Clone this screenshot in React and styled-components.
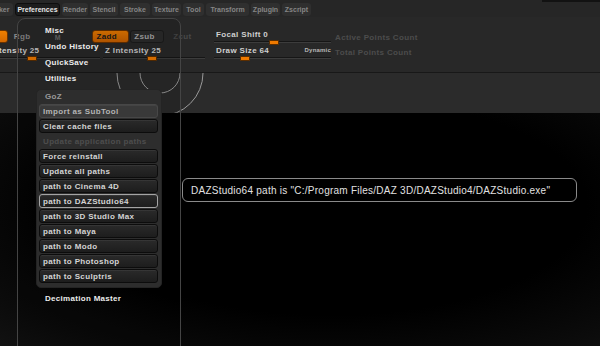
import React from 'react';
import styled, { createGlobalStyle } from 'styled-components';

const GlobalStyle = createGlobalStyle`
  * {
    box-sizing: border-box;
  }
  body {
    margin: 0;
    background: #000;
    overflow: hidden;
  }
`;

const UI_FONT = `"Liberation Sans", Arial, sans-serif`;

const TabList = [
  { name: 'Marker', w: 30 },
  { name: 'Preferences', w: 45, active: true },
  { name: 'Render', w: 26 },
  { name: 'Stencil', w: 28 },
  { name: 'Stroke', w: 30 },
  { name: 'Texture', w: 29 },
  { name: 'Tool', w: 21 },
  { name: 'Transform', w: 43 },
  { name: 'Zplugin', w: 29 },
  { name: 'Zscript', w: 29 },
];

const GozList = [
  { name: 'Import as SubTool', kind: 'soft' },
  { name: 'Clear cache files' },
  { name: 'Update application paths', kind: 'off' },
  { name: 'Force reinstall' },
  { name: 'Update all paths' },
  { name: 'path to Cinema 4D' },
  { name: 'path to DAZStudio64', kind: 'hover' },
  { name: 'path to 3D Studio Max' },
  { name: 'path to Maya' },
  { name: 'path to Modo' },
  { name: 'path to Photoshop' },
  { name: 'path to Sculptris' },
];

function Slider({ label, extra, width, handle, offset }) {
  return (
    <SliderBox $w={width} $offset={offset}>
      <SliderLabel>
        <span>{label}</span>
        {extra && <Tiny>{extra}</Tiny>}
      </SliderLabel>
      <Track>
        <Handle style={{ left: handle }} />
      </Track>
    </SliderBox>
  );
}

function App() {
  return (
    <Screen>
      <GlobalStyle />
      <TabBar>
        <TabStrip>
          {TabList.map(tab => (
            <Tab key={tab.name} $w={tab.w} $active={tab.active}>
              {tab.name}
            </Tab>
          ))}
        </TabStrip>
        <TopShade />
      </TabBar>

      <Toolbar>
        <LeftCluster>
          <ButtonRow>
            <OrangeButton $w={38} />
            <TextCell $w={45} $pad={6} $tone="#8a8a8a">Rgb</TextCell>
            <TextCell $w={40} $pad={2} $tone="#6a6a6a" $small>
              M
            </TextCell>
            <ZButton $w={37} $on>
              Zadd
            </ZButton>
            <ZButton $w={34}>Zsub</ZButton>
            <TextCell $w={40} $pad={8} $tone="#484848">Zcut</TextCell>
          </ButtonRow>
          <SliderRow>
            <Slider label="Rgb Intensity 25" width={130} handle={57} offset={0} />
            <Slider label="Z Intensity 25" width={102} handle={44} offset={3} />
          </SliderRow>
        </LeftCluster>

        <FocalCluster>
          <Slider label="Focal Shift 0" width={117} handle={55} offset={0} />
          <Slider
            label="Draw Size 64"
            extra="Dynamic"
            width={117}
            handle={26}
            offset={0}
          />
        </FocalCluster>

        <Stats>
          <StatLine>Active Points Count</StatLine>
          <StatLine>Total Points Count</StatLine>
        </Stats>
      </Toolbar>

      <Band />
      <Canvas />

      <Cursor width="600" height="40" viewBox="0 0 600 40">
        <circle cx="160" cy="0" r="20" fill="none" stroke="#9a9a9a" strokeWidth="1" />
        <circle cx="160" cy="0" r="43" fill="none" stroke="#9a9a9a" strokeWidth="1" />
      </Cursor>

      <Popup>
        <MenuLabel>Misc</MenuLabel>
        <MenuLabel>Undo History</MenuLabel>
        <MenuLabel>QuickSave</MenuLabel>
        <MenuLabel>Utilities</MenuLabel>
        <GozPanel>
          <GozHeader>GoZ</GozHeader>
          <GozButtons>
            {GozList.map(item => (
              <PathButton key={item.name} $kind={item.kind}>
                {item.name}
              </PathButton>
            ))}
          </GozButtons>
        </GozPanel>
        <MenuLabel $top={3}>Decimation Master</MenuLabel>
      </Popup>

      <Tooltip>
        DAZStudio64 path is "C:/Program Files/DAZ 3D/DAZStudio4/DAZStudio.exe"
      </Tooltip>
    </Screen>
  );
}

const Screen = styled.div`
  position: relative;
  display: flex;
  flex-direction: column;
  width: 600px;
  height: 346px;
  overflow: hidden;
  background: #000;
  font-family: ${UI_FONT};
`;

const TabBar = styled.div`
  display: flex;
  height: 17px;
  background: #262626;
`;

const TabStrip = styled.div`
  display: flex;
  gap: 2px;
  margin-left: -17px;
  padding-top: 3px;
`;

const Tab = styled.div`
  display: flex;
  justify-content: center;
  align-items: center;
  width: ${props => props.$w}px;
  height: 13px;
  border-radius: 3px;
  border: 1px solid ${props => (props.$active ? '#0e0e0e' : 'transparent')};
  background: ${props => (props.$active ? '#1d1d1d' : '#2f2f2f')};
  font-size: 7px;
  font-weight: 700;
  color: ${props => (props.$active ? '#e6e6e6' : '#858585')};
  white-space: nowrap;
`;

const TopShade = styled.div`
  width: 58px;
  height: 2px;
  margin-left: auto;
  background: #121212;
`;

const Toolbar = styled.div`
  display: flex;
  height: 56px;
  padding-top: 12px;
  background: #282828;
  border-bottom: 1px solid #181818;
`;

const LeftCluster = styled.div`
  display: flex;
  flex-direction: column;
  width: 235px;
  margin-left: -30px;
  padding-top: 1px;
`;

const ButtonRow = styled.div`
  display: flex;
  align-items: center;
  height: 13px;
`;

const OrangeButton = styled.div`
  width: ${props => props.$w}px;
  height: 13px;
  border-radius: 3px;
  border: 1px solid #6a3300;
  background: linear-gradient(#f08000, #d46800);
`;

const TextCell = styled.div`
  width: ${props => props.$w}px;
  padding-left: ${props => props.$pad}px;
  font-size: ${props => (props.$small ? 7 : 8)}px;
  font-weight: 700;
  letter-spacing: 0.35px;
  color: ${props => props.$tone};
  line-height: 13px;
  transform: translateY(${props => (props.$small ? 1 : 0)}px);
`;

const ZButton = styled.div`
  display: flex;
  align-items: center;
  width: ${props => props.$w}px;
  height: 13px;
  margin-right: 1px;
  padding-left: 3px;
  border-radius: 3px;
  border: 1px solid ${props => (props.$on ? '#6a3300' : '#1c1c1c')};
  background: ${props =>
    props.$on ? 'linear-gradient(#e87a00, #c86000)' : '#2c2c2c'};
  font-size: 8px;
  font-weight: 700;
  letter-spacing: 0.35px;
  color: ${props => (props.$on ? '#1a1a1a' : '#a8a8a8')};
`;

const SliderRow = styled.div`
  display: flex;
  margin-top: 2px;
`;

const SliderBox = styled.div`
  display: flex;
  flex-direction: column;
  width: ${props => props.$w}px;
  margin-left: ${props => props.$offset}px;
  height: 16px;
`;

const SliderLabel = styled.div`
  display: flex;
  justify-content: space-between;
  align-items: center;
  height: 10px;
  padding-left: 2px;
  font-size: 8px;
  font-weight: 700;
  letter-spacing: 0.35px;
  color: #cfcfcf;
  white-space: nowrap;
`;

const Tiny = styled.span`
  font-size: 6px;
  letter-spacing: 0.2px;
  color: #b8b8b8;
`;

const Track = styled.div`
  position: relative;
  height: 2px;
  margin-top: 2px;
  border-top: 1px solid #161616;
  border-bottom: 1px solid #3c3c3c;
`;

const Handle = styled.div`
  position: absolute;
  top: -2px;
  width: 10px;
  height: 5px;
  border-radius: 1px;
  border: 1px solid #5c2e00;
  background: #ef7a00;
`;

const FocalCluster = styled.div`
  display: flex;
  flex-direction: column;
  width: 117px;
  margin-left: 8px;
  padding-left: 1px;
`;

const Stats = styled.div`
  display: flex;
  flex-direction: column;
  gap: 5px;
  margin-left: 5px;
  padding-top: 4px;
`;

const StatLine = styled.div`
  height: 10px;
  font-size: 8px;
  font-weight: 700;
  letter-spacing: 0.35px;
  color: #4c4c4c;
  white-space: nowrap;
`;

const Band = styled.div`
  height: 40px;
  background: #2b2b2b;
`;

const Canvas = styled.div`
  flex: 1;
  background: radial-gradient(
    ellipse at 55% 40%,
    #000 55%,
    #0b0b0b 85%,
    #161616 110%
  );
`;

const Cursor = styled.svg`
  position: absolute;
  top: 73px;
  left: 0;
`;

const Popup = styled.div`
  position: absolute;
  top: 18px;
  left: 17px;
  width: 164px;
  height: 340px;
  padding-top: 4px;
  border: 1px solid #444;
  border-radius: 8px;
  background: rgba(0, 0, 0, 0.12);
`;

const MenuLabel = styled.div`
  height: 16px;
  margin-top: ${props => props.$top || 0}px;
  padding-left: 27px;
  font-size: 8px;
  font-weight: 700;
  letter-spacing: 0.3px;
  line-height: 16px;
  color: #ececec;
  white-space: nowrap;
`;

const GozPanel = styled.div`
  width: 126px;
  margin: 2px 0 0 18px;
  border-radius: 5px;
  border: 1px solid #242424;
  background: #2d2d2d;
`;

const GozHeader = styled.div`
  height: 14px;
  padding-left: 8px;
  font-size: 8px;
  font-weight: 700;
  letter-spacing: 0.35px;
  line-height: 14px;
  color: #9a9a9a;
`;

const GozButtons = styled.div`
  display: flex;
  flex-direction: column;
  gap: 1px;
  padding: 0 3px 4px 2px;
`;

const PathButton = styled.div`
  display: flex;
  align-items: center;
  height: 14px;
  padding-left: 3px;
  border-radius: 3px;
  border: 1px solid
    ${props =>
      props.$kind === 'hover'
        ? '#a4a4a4'
        : props.$kind === 'soft'
        ? '#474747'
        : props.$kind === 'off'
        ? 'transparent'
        : '#0c0c0c'};
  background: ${props =>
    props.$kind === 'soft'
      ? '#393939'
      : props.$kind === 'off'
      ? 'transparent'
      : 'linear-gradient(#2a2a2a, #1d1d1d)'};
  box-shadow: ${props =>
    props.$kind === 'off' ? 'none' : 'inset 0 1px 0 rgba(255, 255, 255, 0.06)'};
  font-size: 8px;
  font-weight: 700;
  letter-spacing: 0.35px;
  color: ${props =>
    props.$kind === 'off'
      ? '#4e4e4e'
      : props.$kind === 'soft'
      ? '#b4b4b4'
      : '#d4d4d4'};
  white-space: nowrap;
`;

const Tooltip = styled.div`
  position: absolute;
  top: 178px;
  left: 182px;
  display: flex;
  align-items: center;
  width: 395px;
  height: 24px;
  padding-left: 8px;
  border: 1px solid #8a8a8a;
  border-radius: 6px;
  background: #000;
  font-size: 10px;
  letter-spacing: 0.25px;
  color: #e2e2e2;
  white-space: nowrap;
`;

export default App;
